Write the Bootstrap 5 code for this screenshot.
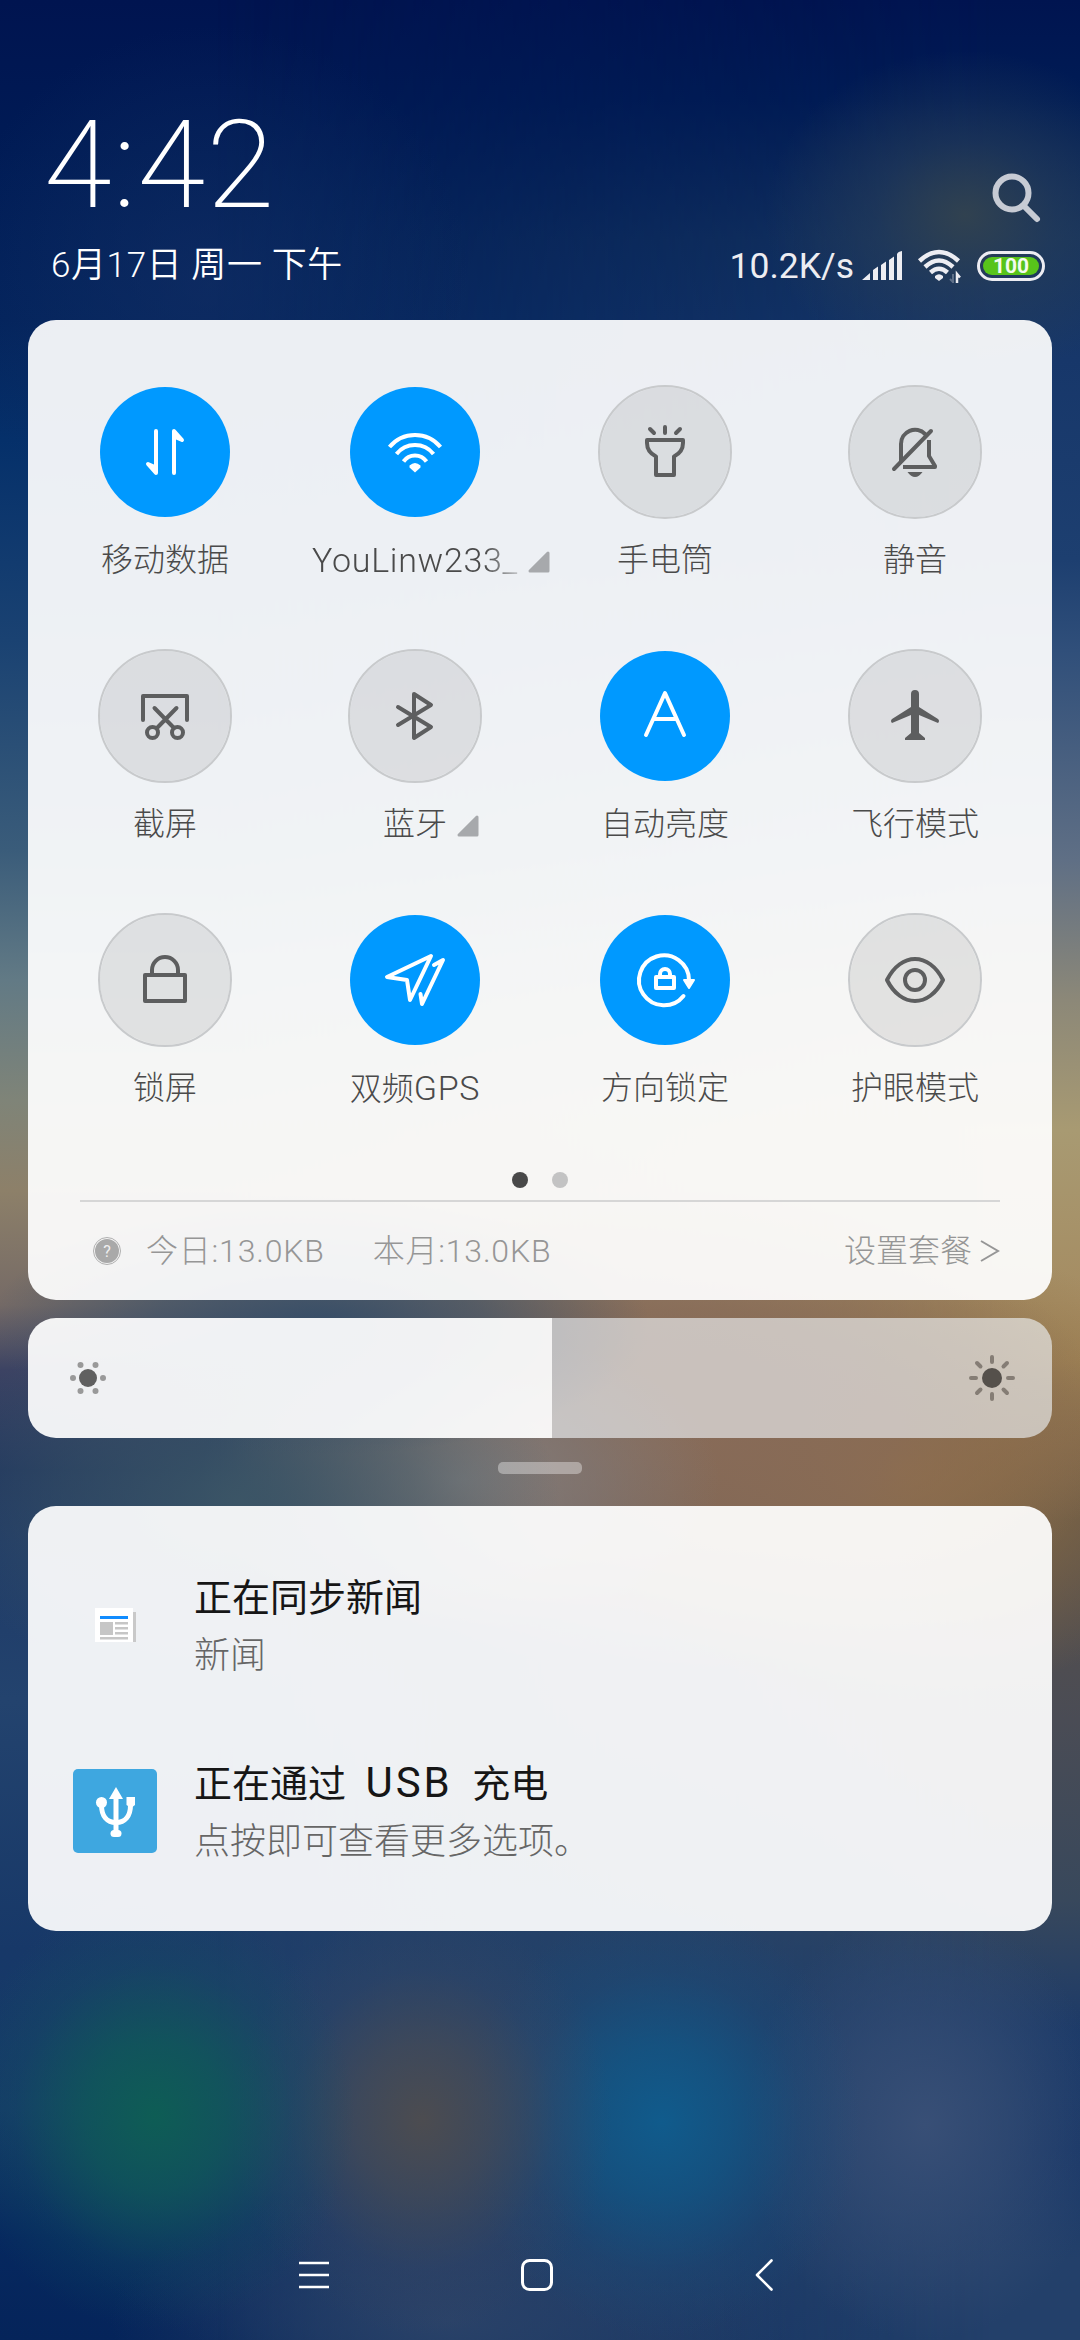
<!DOCTYPE html>
<html lang="zh-CN">
<head>
<meta charset="utf-8">
<meta name="viewport" content="width=device-width, initial-scale=1">
<title>控制中心</title>
<link href="https://cdn.jsdelivr.net/npm/bootstrap@5.3.0/dist/css/bootstrap.min.css" rel="stylesheet">
<style>
  body {
    width: 1080px; height: 2340px; overflow: hidden; position: relative; isolation: isolate;
    font-family: Roboto, "Noto Sans CJK SC", sans-serif; font-weight: 300; color: #4a4a4a;
    background: linear-gradient(#001450 0, #001b55 150px, #03235c 320px, #05306a 440px, #1a4272 640px, #3a5c7a 850px, #627a85 980px, #7f8478 1100px, #8d8069 1190px, #756a66 1305px, #3c4363 1370px, #20365f 1470px, #1f3b68 1560px, #23436e 1700px, #173868 1950px, #143a68 2110px, #06285f 2240px, #05245a 2340px);
  }
  /* blurred wallpaper: right-hand tones fade in over the left-hand ones */
  .wall-right, .wall-spots { position: absolute; inset: 0; z-index: -1; }
  .wall-right {
    background: linear-gradient(#001450 0, #001c55 100px, #14325e 240px, #17376a 360px, #1d3f70 560px, #304f7a 650px, #5f6f85 860px, #8c8878 1000px, #a89a72 1130px, #a58c62 1300px, #a0855a 1360px, #7c6650 1450px, #5a5048 1520px, #4a4c55 1720px, #38485c 1900px, #1c3a68 2030px, #1a3868 2150px, #23406a 2260px, #23406a 2340px);
    -webkit-mask-image: linear-gradient(90deg, transparent 20%, #000 92%); mask-image: linear-gradient(90deg, transparent 20%, #000 92%);
  }
  .wall-spots {
    background:
      radial-gradient(200px 165px at 965px 215px, #33434fee, #2b405880 45%, transparent),
      radial-gradient(260px 260px at 210px 285px, #14306599, #12306455 50%, transparent),
      radial-gradient(330px 130px at 320px 1325px, #334c68f0, #364f6999 50%, transparent),
      radial-gradient(320px 190px at 240px 1500px, #3c5666f0, #3b556580 55%, transparent),
      radial-gradient(260px 150px at 460px 1480px, #85807ef5, #7f7b7c90 50%, transparent),
      radial-gradient(440px 240px at 670px 1430px, #886b58, #886b58cc 50%, transparent),
      radial-gradient(330px 230px at 900px 1470px, #94703e, #90704590 50%, transparent),
      radial-gradient(200px 215px at 155px 2115px, #0e5d55, #0e5a58c0 35%, #10506048 70%, transparent),
      radial-gradient(190px 215px at 422px 2120px, #4c4c50, #484b55b8 35%, #40486040 70%, transparent),
      radial-gradient(200px 215px at 662px 2122px, #105b8c, #105888b8 35%, #15508045 70%, transparent),
      radial-gradient(180px 215px at 925px 2125px, #384f76, #354d74b0 45%, transparent),
      radial-gradient(340px 140px at 450px 2320px, #2a4268, transparent),
      radial-gradient(560px 330px at 540px 2080px, #26456ae6, #24426a99 55%, transparent);
  }
  svg { display: block; flex: none; overflow: visible; }
  .ln { fill: none; stroke: currentColor; stroke-width: 4; stroke-linecap: round; stroke-linejoin: round; }

  .top-area { height: 320px; padding: 106px 35px 0 46px; color: #fff; }
  .clock-face { font-size: 123px; line-height: 118px; font-weight: 200; letter-spacing: 1.2px; margin-left: -2px; }
  .date-line { margin-left: 5px; font-size: 35px; line-height: 52px; letter-spacing: .6px; font-weight: 350; }
  .find-icon { width: 50px; height: 50px; color: #c7cbd4; }
  .net-speed { font-size: 35.5px; line-height: 52px; font-weight: 400; color: #ededf2; }
  .status-line { color: #ededf2; }
  .batt-pill { width: 68px; height: 30px; border: 3px solid #ededf2; border-radius: 15px; padding: 3px; }
  .batt-fill { background: #58c41a; border-radius: 10px; font: 700 21px/19px Roboto, sans-serif; color: #f4fbef; }

  .glass { margin: 0 28px; border-radius: 28px; background: rgba(255,255,255,.925); overflow: hidden; }
  .qs-panel { height: 980px; padding-top: 65px; }
  .qs-grid { margin: 0 12px; row-gap: 69px; }
  .qs-ring { width: 134px; height: 134px; border: 2px solid #c8cacc; color: #5d5e5f; background: rgba(90,95,95,.13); background-clip: padding-box; }
  .qs-on { border-color: transparent; background: #0099ff; background-clip: padding-box; color: #fff; }
  .qs-name { margin-top: 21px; height: 40px; font-size: 32px; line-height: 40px; white-space: nowrap; }
  .qs-latin { font-size: 34px; letter-spacing: .7px; }
  .qs-fade { -webkit-mask-image: linear-gradient(90deg,#000 84%,#0004 100%); mask-image: linear-gradient(90deg,#000 84%,#0004 100%); }
  .qs-more { position: absolute; left: 100%; top: 11px; margin-left: 10px; color: #a7a9ac; }
  .page-dots { margin-top: 64px; gap: 24px; }
  .page-dots i { width: 16px; height: 16px; border-radius: 50%; background: #c3c3c3; }
  .page-dots i:first-child { background: #484848; }
  .qs-rule { margin: 12px 52px 0; height: 2px; background: #d6d6d6; }
  .data-line { height: 97px; margin: 0 52px 0 65px; color: #969696; font-size: 32px; }
  .data-sum { letter-spacing: .8px; }

  .bright { height: 120px; margin-top: 18px; background: none; }
  .bright-on { width: 524px; padding-left: 42px; background: rgba(255,255,255,.925); }
  .bright-off { padding-right: 37px; background: rgba(236,240,242,.65); }
  .grip { width: 84px; height: 12px; border-radius: 5px; margin: 24px auto 32px; background: rgba(255,255,255,.36); }

  .notes { height: 425px; padding: 64px 45px 0; }
  .note-item { height: 186px; gap: 37px; }
  .note-icon { width: 84px; height: 84px; margin-top: 13px; }
  .note-head { font-size: 38px; line-height: 56px; font-weight: 400; color: #161616; }
  .note-latin { font-size: 42px; line-height: 1; letter-spacing: 3px; margin: 0 10px 0 10px; }
  .note-text { font-size: 36px; line-height: 60px; color: #666; }
  .usb-tile { background: #3ea7e0; border-radius: 5px; color: #fff; }
  .nav-keys { height: 409px; padding: 328px 307px 0 299px; color: #fff; }
</style>
</head>
<body>
<div class="wall-right"></div>
<div class="wall-spots"></div>

<header class="top-area">
  <div class="d-flex justify-content-between">
    <div class="clock-face">4:42</div>
    <svg class="find-icon mt-auto mb-0" viewBox="0 0 50 50"><g class="ln" style="stroke-width:6"><circle cx="17" cy="19" r="16.5"/><path d="M29 32 42 45"/></g></svg>
  </div>
  <div class="d-flex justify-content-between align-items-center mt-3">
    <div class="date-line">6月17日 周一 下午</div>
    <div class="status-line d-flex align-items-center">
      <span class="net-speed">10.2K/s</span>
      <svg class="ms-2" width="41" height="30" viewBox="0 0 41 30" fill="currentColor"><path d="M0 29 8 22V29ZM11 19 16 15.500V29H11ZM19 14 24 10.500V29H19ZM27 9 32 5.500V29H27ZM35 3Q36 .5 40 0V29H35Z"/></svg>
      <svg style="margin:0 16px 0 15px" width="43" height="34" viewBox="0 0 43 34"><g fill="none" stroke="currentColor" stroke-width="4.500"><path d="M1.500 12Q21 -6 40.500 12M7 18Q21 5 35 18M12.500 23.500Q21 16 29.500 23.500"/></g><path fill="currentColor" d="M17 27Q21 23.500 25 27V29L21 32 17 29Z"/><path d="M35 25V34M35 33 32 30" stroke="currentColor" stroke-width="2" opacity=".3"/><path d="M39 34V25L42 28.500" fill="none" stroke="currentColor" stroke-width="2.500"/></svg>
      <div class="batt-pill"><div class="batt-fill h-100 text-center">100</div></div>
    </div>
  </div>
</header>

<section class="glass qs-panel">
  <div class="qs-grid row row-cols-4 gx-0">
    <div class="col d-flex flex-column align-items-center">
      <div class="qs-ring qs-on rounded-circle"><svg viewBox="-65 -65 130 130"><g class="ln"><path d="M-9 -21V21L-17 12 -9 15.500"/><path d="M9 21V-21L17 -12 9 -15.500"/></g></svg></div>
      <div class="qs-name">移动数据</div>
    </div>
    <div class="col d-flex flex-column align-items-center">
      <div class="qs-ring qs-on rounded-circle"><svg viewBox="-65 -65 130 130"><g class="ln" style="stroke-linecap:butt"><path d="M-25.500 -5A33 33 0 0 1 25.500 -5M-18.500 2A23.500 23.500 0 0 1 18.500 2M-11.500 9.500A14 14 0 0 1 11.500 9.500"/></g><path fill="currentColor" d="M-5.500 13.500Q0 8.500 5.500 13.500V15.500L0 20.500 -5.500 15.500Z"/></svg></div>
      <div class="qs-name position-relative"><span class="qs-latin qs-fade d-block">YouLinw233_</span><svg class="qs-more" width="22" height="22" viewBox="0 0 22 22"><path d="M2 20 20 2V20Z" fill="currentColor" stroke="currentColor" stroke-width="3" stroke-linejoin="round"/></svg></div>
    </div>
    <div class="col d-flex flex-column align-items-center">
      <div class="qs-ring rounded-circle"><svg viewBox="-65 -65 130 130"><g class="ln"><path d="M-18 -12H18V-9C18 -2 14 2 9 4.500V23H-9V4.500C-14 2 -18 -2 -18 -9ZM0 -25V-19M-15 -23 -11 -19M15 -23 11 -19"/></g></svg></div>
      <div class="qs-name">手电筒</div>
    </div>
    <div class="col d-flex flex-column align-items-center">
      <div class="qs-ring rounded-circle"><svg viewBox="-65 -65 130 130"><g class="ln"><path d="M-21 17 16 -21M-14 9V-8A14 14 0 0 1 10 -18"/><path style="stroke-linecap:butt" d="M14 -12V4L20 14V15H-12"/></g><path fill="currentColor" d="M-7.500 20H7.500Q4 25 0 25T-7.500 20Z"/></svg></div>
      <div class="qs-name">静音</div>
    </div>
    <div class="col d-flex flex-column align-items-center">
      <div class="qs-ring rounded-circle"><svg viewBox="-65 -65 130 130"><g class="ln"><path d="M-22 4V-20H22V4M11.500 -8 -8 12M-10.500 -8 9 12"/><circle cx="-12.500" cy="16.500" r="5.500"/><circle cx="12.500" cy="16.500" r="5.500"/></g></svg></div>
      <div class="qs-name">截屏</div>
    </div>
    <div class="col d-flex flex-column align-items-center">
      <div class="qs-ring rounded-circle"><svg viewBox="-65 -65 130 130"><path class="ln" d="M-17 -9 16 11 -1 22V-22L16 -11 -17 9"/></svg></div>
      <div class="qs-name position-relative">蓝牙<svg class="qs-more" width="22" height="22" viewBox="0 0 22 22"><path d="M2 20 20 2V20Z" fill="currentColor" stroke="currentColor" stroke-width="3" stroke-linejoin="round"/></svg></div>
    </div>
    <div class="col d-flex flex-column align-items-center">
      <div class="qs-ring qs-on rounded-circle"><svg viewBox="-65 -65 130 130"><path class="ln" d="M-19 19 0 -23 19 19M-11 3H11"/></svg></div>
      <div class="qs-name">自动亮度</div>
    </div>
    <div class="col d-flex flex-column align-items-center">
      <div class="qs-ring rounded-circle"><svg viewBox="-65 -65 130 130"><path fill="currentColor" d="M-4 -22Q-4 -26 0 -26T4 -22V-9L23 3Q25 5 23 7L4 -1V17L10 22V24H-10V22L-4 17V-1L-23 7Q-25 5 -23 3L-4 -9Z"/></svg></div>
      <div class="qs-name">飞行模式</div>
    </div>
    <div class="col d-flex flex-column align-items-center">
      <div class="qs-ring rounded-circle"><svg viewBox="-65 -65 130 130"><path class="ln" d="M-20 -5H20V21H-20ZM-13 -5V-10A13 13 0 0 1 13 -10V-5"/></svg></div>
      <div class="qs-name">锁屏</div>
    </div>
    <div class="col d-flex flex-column align-items-center">
      <div class="qs-ring qs-on rounded-circle"><svg viewBox="-65 -65 130 130"><path class="ln" d="M16 -24 -28 -3 -8 0 -5 20ZM19 -15 28 -20 7 24 5.500 14"/></svg></div>
      <div class="qs-name">双频<span class="qs-latin">GPS</span></div>
    </div>
    <div class="col d-flex flex-column align-items-center">
      <div class="qs-ring qs-on rounded-circle"><svg viewBox="-65 -65 130 130"><g class="ln"><path d="M24 0A25 25 0 1 0 18.500 16M-9 -3H9V8H-9ZM-5 -4V-6A5 5 0 0 1 5 -6V-4"/></g><path fill="currentColor" stroke="currentColor" stroke-width="2" stroke-linejoin="round" d="M19 0H29L24 8Z"/></svg></div>
      <div class="qs-name">方向锁定</div>
    </div>
    <div class="col d-flex flex-column align-items-center">
      <div class="qs-ring rounded-circle"><svg viewBox="-65 -65 130 130"><g class="ln"><path d="M-28 0C-14 -28 14 -28 28 0C14 28 -14 28 -28 0Z"/><circle r="10"/></g></svg></div>
      <div class="qs-name">护眼模式</div>
    </div>
  </div>
  <div class="page-dots d-flex justify-content-center"><i></i><i></i></div>
  <div class="qs-rule"></div>
  <div class="data-line d-flex align-items-center">
    <svg width="28" height="28" viewBox="-14 -14 28 28"><circle r="13.500" fill="none" stroke="#b0b0b0"/><circle r="12" fill="#a9a9a9"/><text y="5.500" text-anchor="middle" font-size="16" font-weight="400" fill="#f0f0f0">?</text></svg>
    <span class="data-sum" style="margin-left:25px">今日:13.0KB</span>
    <span class="data-sum" style="margin-left:48px">本月:13.0KB</span>
    <span class="ms-auto">设置套餐</span>
    <svg class="ms-2" style="margin-right:1px" width="19" height="22" viewBox="0 0 19 22"><path d="M1 1 18 11 1 21" fill="none" stroke="currentColor" stroke-width="2"/></svg>
  </div>
</section>

<section class="glass bright d-flex">
  <div class="bright-on d-flex align-items-center">
    <svg width="36" height="36" viewBox="-18 -18 36 36" fill="#999"><circle r="9" fill="#606060"/><circle cx="-15" r="3"/><circle cx="15" r="3"/><circle cx="-7.500" cy="-13" r="3"/><circle cx="7.500" cy="-13" r="3"/><circle cx="-7.500" cy="13" r="3"/><circle cx="7.500" cy="13" r="3"/></svg>
  </div>
  <div class="bright-off flex-grow-1 d-flex align-items-center justify-content-end">
    <svg width="46" height="46" viewBox="-23 -23 46 46"><circle r="10" fill="#55504b"/><path stroke="#857d75" stroke-width="4" stroke-linecap="round" d="M0 -21V-16M0 21V16M-21 0H-16M21 0H16M-15 -15 -11.500 -11.500M15 -15 11.500 -11.500M-15 15 -11.500 11.500M15 15 11.500 11.500"/></svg>
  </div>
</section>

<div class="grip"></div>

<section class="glass notes">
  <div class="note-item d-flex">
    <svg class="note-icon" viewBox="0 0 84 84"><path fill="#c9c9c9" d="M60 29H63V59H60Z"/><path fill="#fff" d="M22 25H60V59H22Z"/><path fill="#118cff" d="M27 33H55V36H27Z"/><path fill="#c6c6c6" d="M27 39H40V52H27ZM42 39H55V41.500H42ZM42 44H55V46.500H42ZM42 49H55V51.500H42ZM27 54H55V56.500H27Z"/></svg>
    <div><div class="note-head">正在同步新闻</div><div class="note-text">新闻</div></div>
  </div>
  <div class="note-item d-flex">
    <svg class="note-icon usb-tile" viewBox="0 0 84 84"><g fill="none" stroke="currentColor"><path stroke-width="5" d="M43 26V62"/><path stroke-width="5" d="M28.500 36C28.500 47 34 53.500 43 53.500S57.500 47 57.500 36"/></g><g fill="currentColor"><path d="M43 18 50 30H36Z"/><circle cx="28.500" cy="33.500" r="5.500"/><path d="M53.500 28H62V36L58 39 53.500 36Z"/><rect x="37.500" y="61" width="11" height="7" rx="3.500"/></g></svg>
    <div><div class="note-head">正在通过 <span class="note-latin">USB</span> 充电</div><div class="note-text">点按即可查看更多选项。</div></div>
  </div>
</section>

<nav class="nav-keys d-flex justify-content-between align-items-start">
  <svg width="30" height="32" viewBox="0 0 30 32"><path d="M0 4H30M0 16H30M0 28H30" stroke="currentColor" stroke-width="2.600"/></svg>
  <svg style="margin-right:10px" width="32" height="32" viewBox="0 0 32 32"><rect x="1.500" y="1.500" width="29" height="29" rx="7" fill="none" stroke="currentColor" stroke-width="3"/></svg>
  <svg width="18" height="32" viewBox="0 0 18 32"><path class="ln" style="stroke-width:2.600" d="M16.500 1.500 2 16 16.500 30.500"/></svg>
</nav>
<script src="https://cdn.jsdelivr.net/npm/bootstrap@5.3.0/dist/js/bootstrap.bundle.min.js"></script>
</body>
</html>
